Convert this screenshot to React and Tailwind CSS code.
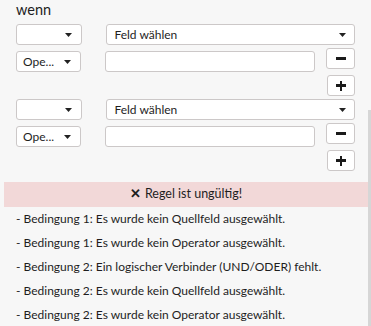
import React from "react";

const Caret = () => (
  <svg width="7" height="4" viewBox="0 0 7 4" className="shrink-0">
    <path d="M0 0 L7 0 L3.5 4 Z" fill="#222" />
  </svg>
);

const Condition = () => (
  <div className="flex flex-col">
    <div className="flex h-[21px]">
      <div className="w-[67px] h-full bg-white border border-[#ccc8c8] rounded-[3px] flex items-center justify-end pr-[9px]">
        <Caret />
      </div>
      <div className="ml-[24px] w-[251px] h-full bg-white border border-[#ccc8c8] rounded-[3px] flex items-center justify-between pl-[7px] pr-[8px] text-[12px]">
        <span>Feld wählen</span>
        <Caret />
      </div>
    </div>
    <div className="flex mt-[6px] h-[21px]">
      <div className="w-[67px] h-full bg-white border border-[#ccc8c8] rounded-[3px] flex items-center justify-between pl-[6px] pr-[9px] text-[12px]">
        <span>Ope...</span>
        <Caret />
      </div>
      <div className="ml-[24px] w-[221px] h-full bg-white border border-[#ccc8c8] rounded-[3px]" />
      <button className="ml-[11px] -mt-[3px] w-[30px] h-[21px] bg-white border border-[#ccc8c8] rounded-[3px] flex items-center justify-center">
        <span className="block w-[10px] h-[2.5px] bg-[#1a1a1a]" />
      </button>
    </div>
    <div className="flex mt-[3px]">
      <button className="ml-[311px] w-[30px] h-[21px] bg-white border border-[#ccc8c8] rounded-[3px] flex items-center justify-center relative">
        <span className="absolute w-[10px] h-[2.5px] bg-[#1a1a1a]" />
        <span className="absolute w-[2.5px] h-[10px] bg-[#1a1a1a]" />
      </button>
    </div>
  </div>
);

const errors = [
  "Bedingung 1: Es wurde kein Quellfeld ausgewählt.",
  "Bedingung 1: Es wurde kein Operator ausgewählt.",
  "Bedingung 2: Ein logischer Verbinder (UND/ODER) fehlt.",
  "Bedingung 2: Es wurde kein Quellfeld ausgewählt.",
  "Bedingung 2: Es wurde kein Operator ausgewählt.",
];

export default function App() {
  return (
    <div
      className="relative w-[371px] h-[326px] overflow-hidden bg-[#f7f7f7] text-[#1e1e1e]"
      style={{ fontFamily: 'Lato, "Noto Sans", sans-serif' }}
    >
      <div className="px-[16px]">
        <div className="text-[14.5px] leading-[20px]">wenn</div>
        <div className="mt-[4px] flex flex-col gap-[3px]">
          <Condition />
          <Condition />
        </div>
      </div>
      <div className="mt-[11px] ml-[4px] mr-[3px] h-[25px] bg-[#f2d8d8] flex items-center justify-center text-[12.5px]">
        <span className="font-bold mr-[4px] text-[12.5px]">✕</span>
        <span>Regel ist ungültig!</span>
      </div>
      <div className="px-[16px] text-[12px]">
        {errors.map((e) => (
          <div key={e} className="h-[24px] leading-[24px]">
            - {e}
          </div>
        ))}
      </div>
      <div className="absolute right-0 top-[110px] bottom-0 w-[3px] bg-[#d6d6d6]" />
    </div>
  );
}
